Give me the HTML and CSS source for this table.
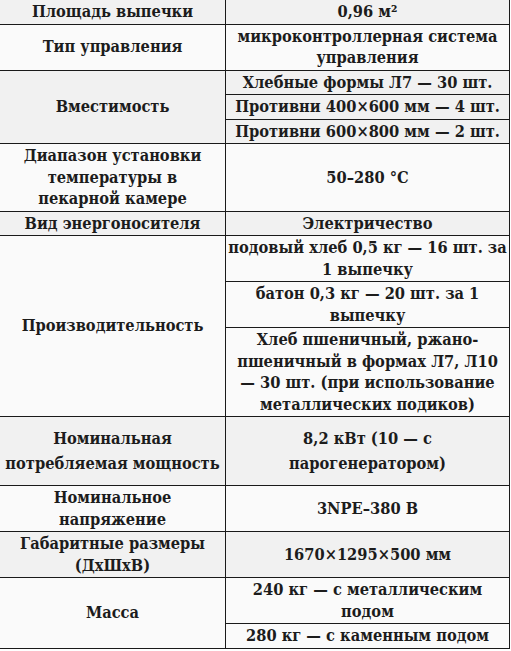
FILE: index.html
```html
<!DOCTYPE html>
<html lang="ru">
<head>
<meta charset="utf-8">
<title>Характеристики</title>
<link rel="stylesheet" href="styles.css">
</head>
<body>
<table class="specs">
  <colgroup><col class="c-name"><col class="c-val"></colgroup>
  <tr class="odd r1"><td>Площадь выпечки</td><td>0,96 м²</td></tr>
  <tr class="even"><td>Тип управления</td><td>микроконтроллерная система<br>управления</td></tr>
  <tr class="odd"><td rowspan="3">Вместимость</td><td>Хлебные формы Л7 — 30 шт.</td></tr>
  <tr class="odd"><td>Противни 400×600 мм — 4 шт.</td></tr>
  <tr class="odd"><td>Противни 600×800 мм — 2 шт.</td></tr>
  <tr class="even"><td>Диапазон установки<br>температуры в<br>пекарной камере</td><td>50–280 °C</td></tr>
  <tr class="odd"><td>Вид энергоносителя</td><td>Электричество</td></tr>
  <tr class="even"><td rowspan="3">Производительность</td><td>подовый хлеб 0,5 кг — 16 шт. за<br>1 выпечку</td></tr>
  <tr class="even"><td>батон 0,3 кг — 20 шт. за 1<br>выпечку</td></tr>
  <tr class="even"><td>Хлеб пшеничный, ржано-<br>пшеничный в формах Л7, Л10<br>— 30 шт. (при использование<br>металлических подиков)</td></tr>
  <tr class="odd tall"><td>Номинальная<br>потребляемая мощность</td><td>8,2 кВт (10 — с<br>парогенератором)</td></tr>
  <tr class="even"><td>Номинальное<br>напряжение</td><td>3NPE–380 В</td></tr>
  <tr class="odd"><td>Габаритные размеры<br>(ДхШхВ)</td><td>1670×1295×500 мм</td></tr>
  <tr class="even"><td rowspan="2">Масса</td><td>240 кг — с металлическим<br>подом</td></tr>
  <tr class="even"><td>280 кг — с каменным подом</td></tr>
</table>
</body>
</html>
```

FILE: styles.css
```css
html, body {
  margin: 0;
  padding: 0;
  background: #ffffff;
}

.specs {
  border-collapse: collapse;
  width: 510px;
  margin: -1px 0 0 -1px;
  font-family: "DejaVu Serif Condensed", "DejaVu Serif", serif;
  font-stretch: condensed;
  font-weight: bold;
  font-size: 16.3px;
  line-height: 21.5px;
  color: #1c1c1c;
  table-layout: fixed;
}

.c-name { width: 226px; }
.c-val { width: 284px; }

.specs td {
  border: 1px solid #1a1a1a;
  padding: 1px 0;
  text-align: center;
  vertical-align: middle;
  white-space: nowrap;
}

.odd td { background: #f1f1f1; }
.even td { background: #fafafa; }

.tall td {
  height: 66px;
  line-height: 25px;
}
```
